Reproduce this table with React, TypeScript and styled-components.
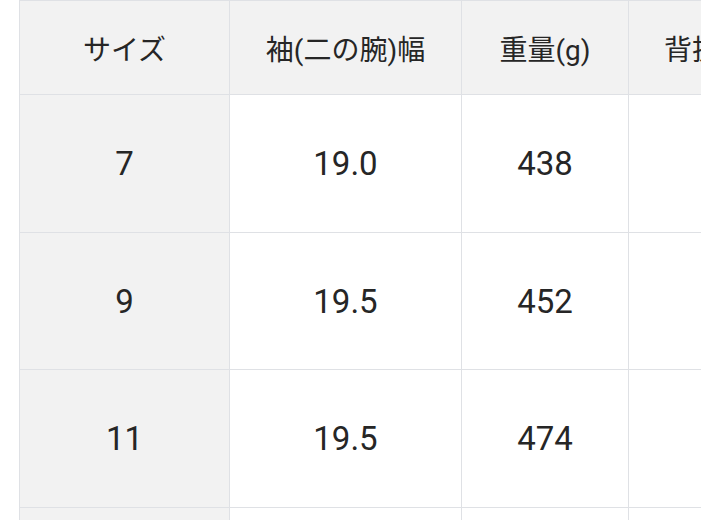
import React from 'react';
import styled, { createGlobalStyle } from 'styled-components';

const GlobalStyle = createGlobalStyle`
    html, body {
        margin: 0;
        padding: 0;
        background: #ffffff;
    }
    body {
        font-family: Roboto, "Noto Sans CJK JP", sans-serif;
        color: #262626;
    }
`

const Wrapper = styled.div`
    margin-left: 19px;
    width: 682px;
    height: 520px;
    overflow: hidden;
`

const Table = styled.table`
    border-collapse: collapse;
    table-layout: fixed;
    width: 955px;
`

const HeadCell = styled.th<{ $w: number }>`
    width: ${p => p.$w}px;
    height: 93px;
    padding: 0;
    background: #f2f2f2;
    border: 1px solid #dfe1e5;
    font-weight: 400;
    font-size: 28px;
    text-align: center;
    vertical-align: middle;
    white-space: nowrap;
    overflow: hidden;
`

const Cell = styled.td<{ $side?: boolean }>`
    height: 136.7px;
    padding: 0;
    background: ${p => (p.$side ? '#f2f2f2' : '#ffffff')};
    border: 1px solid #dfe1e5;
    font-size: 33px;
    text-align: center;
    vertical-align: middle;
`

const columns = [
    { label: 'サイズ', w: 209 },
    { label: '袖(二の腕)幅', w: 231 },
    { label: '重量(g)', w: 166 },
    { label: '背抜き丈', w: 182 },
    { label: '着丈', w: 167 },
]

const rows = [
    ['7', '19.0', '438', '', ''],
    ['9', '19.5', '452', '', ''],
    ['11', '19.5', '474', '', ''],
    ['13', '20.0', '496', '', ''],
]

const App = () => {
    return (
        <>
            <GlobalStyle />
            <Wrapper>
                <Table>
                    <thead>
                        <tr>
                            {columns.map(c => (
                                <HeadCell key={c.label} $w={c.w}>{c.label}</HeadCell>
                            ))}
                        </tr>
                    </thead>
                    <tbody>
                        {rows.map(r => (
                            <tr key={r[0]}>
                                {r.map((v, i) => (
                                    <Cell key={i} $side={i === 0}>{v}</Cell>
                                ))}
                            </tr>
                        ))}
                    </tbody>
                </Table>
            </Wrapper>
        </>
    );
}

export default App;
